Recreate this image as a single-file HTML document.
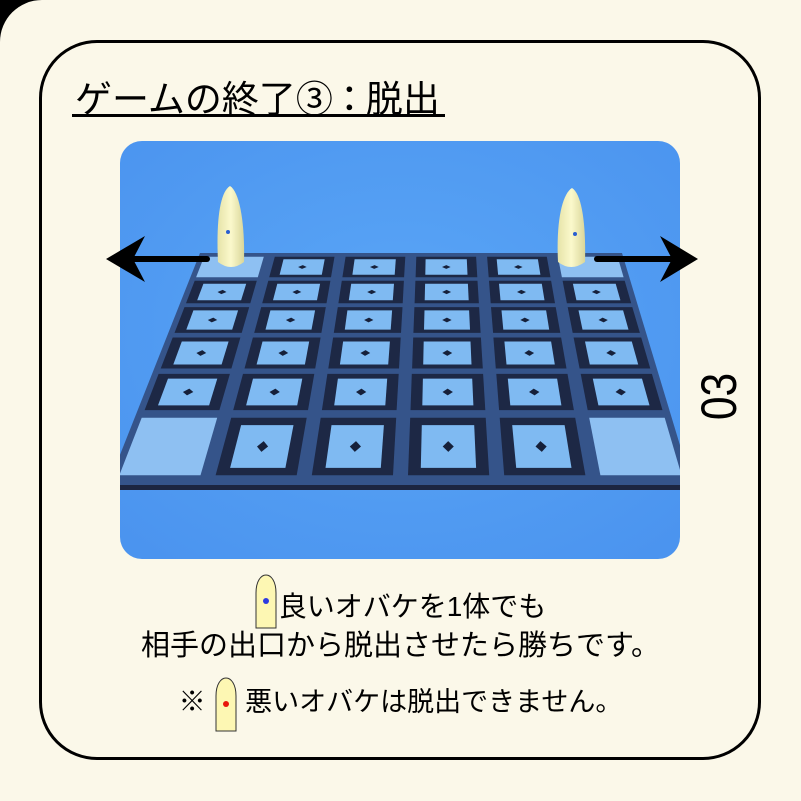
<!DOCTYPE html>
<html><head><meta charset="utf-8">
<style>
html,body{margin:0;padding:0;}
body{width:801px;height:801px;background:#000;position:relative;overflow:hidden;font-family:"Liberation Sans","Noto Sans CJK JP",sans-serif;}
.bg{position:absolute;left:0;top:0;width:801px;height:801px;background:#fbf8e9;border-top-left-radius:42px;}
.card{position:absolute;left:39px;top:40px;width:716px;height:714px;border:3px solid #000;border-radius:58px;}
.title{position:absolute;left:75px;top:69px;font-size:37px;color:#000;white-space:nowrap;}
.uline{position:absolute;left:72px;top:114px;width:373px;height:3px;background:#000;}
.img{position:absolute;left:120px;top:141px;width:560px;height:418px;border-radius:22px;overflow:hidden;}
.num{position:absolute;left:693px;top:374px;width:52px;height:48px;font-size:50px;line-height:48px;transform-origin:center;transform:rotate(-90deg) scaleX(0.85);text-align:center;color:#000;}
.t{position:absolute;left:0;width:801px;text-align:center;color:#000;white-space:nowrap;}
.gh{display:inline-block;vertical-align:middle;}
</style></head><body>
<div class="bg"></div>
<div class="card"></div>
<div class="title">ゲームの終了③<span style="margin:0 -2px 0 -2px">：</span>脱出</div>
<div class="uline"></div>
<div class="img">
<svg width="560" height="418" viewBox="120 141 560 418">
<defs>
<radialGradient id="bgG" cx="0.5" cy="0.45" r="0.7">
<stop offset="0" stop-color="#5aa6f6"/><stop offset="1" stop-color="#4b94ef"/>
</radialGradient>
<linearGradient id="ghG" x1="0" x2="1">
<stop offset="0" stop-color="#e6e3a8"/><stop offset="0.5" stop-color="#fbf9cc"/><stop offset="1" stop-color="#d9d69a"/>
</linearGradient>
</defs>
<rect x="120" y="141" width="560" height="418" fill="url(#bgG)"/>
<g id="board"></g>
<path d="M218,262 C216,220 220,192 230,186 C240,192 245,225 244,262 Q231,272 218,262Z" fill="url(#ghG)"/>
<circle cx="228" cy="232" r="2" fill="#2a5fd0"/>
<path d="M558,262 C556,222 562,194 572,188 C582,194 586,225 585,262 Q571,272 558,262Z" fill="url(#ghG)"/>
<circle cx="575" cy="234" r="2" fill="#2a5fd0"/>
</svg>
</div>
<svg style="position:absolute;left:0;top:0" width="801" height="801">
<line x1="207" y1="259" x2="125" y2="259" stroke="#000" stroke-width="6" stroke-linecap="round"/>
<path d="M106,259 L145,236 L133,259 L145,282Z" fill="#000"/>
<line x1="597" y1="259" x2="680" y2="259" stroke="#000" stroke-width="6" stroke-linecap="round"/>
<path d="M698,259 L660,236 L672,259 L660,282Z" fill="#000"/>
</svg>
<div class="num">03</div>
<div class="t" style="top:585px;font-size:28px;line-height:44px;">
<svg class="gh" width="22" height="56" viewBox="0 0 22 56" style="margin-right:2px;margin-top:-16px"><path d="M1,55 L1,20 C1,8 6,2 11,2 C16,2 21,8 21,20 L21,55Z" fill="#fdf7b3" stroke="#333" stroke-width="1"/><circle cx="11" cy="28" r="3" fill="#2d3be0"/></svg>良いオバケを1体でも</div>
<div class="t" style="top:626px;font-size:29px;line-height:40px;">相手の出口から脱出させたら勝ちです。</div>
<div class="t" style="top:672px;font-size:27px;line-height:60px;">※ <svg class="gh" width="22" height="56" viewBox="0 0 22 56" style="margin:0 8px 0 2px"><path d="M1,55 L1,20 C1,8 6,2 11,2 C16,2 21,8 21,20 L21,55Z" fill="#fdf7b3" stroke="#333" stroke-width="1"/><circle cx="11" cy="28" r="3" fill="#e8160c"/></svg>悪いオバケは脱出できません。</div>
<script>
(function(){
var ns="http://www.w3.org/2000/svg",g=document.getElementById("board");
var top=253,bot=485,tl=200,tr=622,bl=108,br=692;
function xl(y){return tl+(bl-tl)*(y-top)/(bot-top);}
function xr(y){return tr+(br-tr)*(y-top)/(bot-top);}
function P(u,y){var a=xl(y),b=xr(y);return (a+(b-a)*u).toFixed(1)+","+y.toFixed(1);}
function poly(pts,fill){var p=document.createElementNS(ns,"polygon");p.setAttribute("points",pts.join(" "));p.setAttribute("fill",fill);g.appendChild(p);}
poly([P(0,top),P(1,top),P(1,bot),P(0,bot)],"#35548a");
poly([P(0,bot),P(1,bot),P(1,bot+5),P(0,bot+5)],"#1c2540");
var rows=[255,279,305,335,371,413,480];
for(var r=0;r<6;r++){for(var c=0;c<6;c++){
 var y0=rows[r],y1=rows[r+1],h=y1-y0;
 var u0=c/6,u1=(c+1)/6;
 var corner=(r==0||r==5)&&(c==0||c==5);
 var ya=y0+h*0.07,yb=y1-h*0.07,ua=u0+0.013,ub=u1-0.013;
 poly([P(ua,ya),P(ub,ya),P(ub,yb),P(ua,yb)],corner?"#8ec0f2":"#1d2845");
 if(!corner){
 var yc=y0+h*0.18,yd=y1-h*0.18,uc=u0+0.035,ud=u1-0.035;
 poly([P(uc,yc),P(ud,yc),P(ud,yd),P(uc,yd)],"#7fbaf2");
 var ym=(y0+y1)/2,um=(u0+u1)/2,dy=h*0.08,du=0.01;
 poly([P(um,ym-dy),P(um+du,ym),P(um,ym+dy),P(um-du,ym)],"#16203a");
 }
}}
})();
</script>
</body></html>
